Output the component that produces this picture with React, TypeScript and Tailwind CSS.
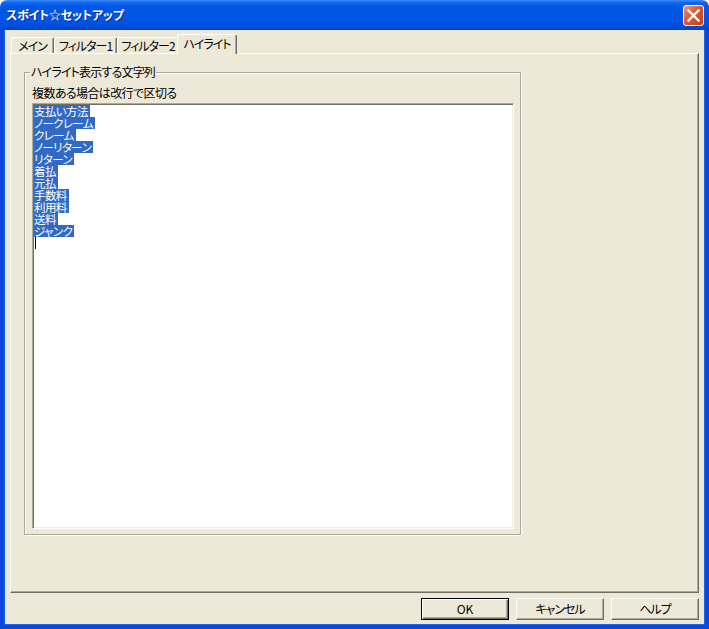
import React from "react";

const lines = [
  "支払い方法",
  "ノークレーム",
  "クレーム",
  "ノーリターン",
  "リターン",
  "着払",
  "元払",
  "手数料",
  "利用料",
  "送料",
  "ジャンク",
];

function Tab({ label, w, selected }: { label: string; w: number; selected?: boolean }) {
  if (selected) {
    return (
      <div
        className="relative z-10 -mb-[1px] -ml-[2px] h-[20px] flex items-center justify-center bg-[#ECE9D8] border-t border-l border-r border-t-white border-l-white border-r-[#716F64] rounded-tl-[2px] rounded-tr-[2px] shadow-[inset_-1px_0_0_#ACA899] leading-[14px] pb-[1px] tracking-[-1px]"
        style={{ width: w }}
      >
        {label}
      </div>
    );
  }
  return (
    <div
      className="h-[16px] flex items-center justify-center bg-[#ECE9D8] border-t border-l border-r border-t-white border-l-white border-r-[#716F64] rounded-tl-[2px] rounded-tr-[2px] shadow-[inset_-1px_0_0_#ACA899] leading-[14px] pt-[1px] tracking-[-1px]"
      style={{ width: w }}
    >
      {label}
    </div>
  );
}

function Button({ label, def }: { label: string; def?: boolean }) {
  return (
    <div
      className={
        def
          ? "w-[88px] h-[22px] flex items-center justify-center border border-black bg-[#ECE9D8] shadow-[inset_1px_1px_0_#fff,inset_-1px_-1px_0_#716F64,inset_-2px_-2px_0_#ACA899] leading-[14px]"
          : "w-[88px] h-[22px] flex items-center justify-center border border-t-white border-l-white border-r-[#716F64] border-b-[#716F64] bg-[#ECE9D8] shadow-[inset_-1px_-1px_0_#ACA899] leading-[14px] tracking-[-1px]"
      }
    >
      {label}
    </div>
  );
}

export default function App() {
  return (
    <div className="w-[709px] h-[629px] flex flex-col bg-white font-['Noto_Sans_CJK_JP',sans-serif] [font-feature-settings:'palt'] text-[12px] text-black select-none">
      {/* Title bar */}
      <div className="h-[30px] shrink-0 rounded-t-[7px] bg-[linear-gradient(to_bottom,#3D8EF7_0%,#1467EE_8%,#0058E6_22%,#0055E5_70%,#004CDA_88%,#0043C8_100%)] flex items-center pl-[6px] pr-[5px]">
        <span className="text-white font-bold text-[12px] leading-[14px] tracking-[-0.2px] [text-shadow:1px_1px_0_#0A2A8C]">
          スポイト☆セットアップ
        </span>
        <div className="ml-auto w-[21px] h-[21px] rounded-[3px] border border-white bg-[linear-gradient(135deg,#EE9A7E_0%,#DE5631_45%,#C8401C_100%)] flex items-center justify-center">
          <svg width="19" height="19" viewBox="0 0 19 19">
            <path d="M4.5 4.5 L14.5 14.5 M14.5 4.5 L4.5 14.5" stroke="#fff" strokeWidth="2.4" strokeLinecap="square" />
          </svg>
        </div>
      </div>

      {/* Window body */}
      <div className="flex-1 flex flex-col bg-[#ECE9D8] border-l-4 border-r-4 border-b-4 border-[#0A48DC] shadow-[inset_1px_0_0_#1C63EC,inset_-1px_0_0_#1C63EC,inset_0_-1px_0_#1C63EC] pt-[3px] pl-[6px] pr-[6px] pb-[5px]">
        {/* Tabs */}
        <div className="h-[20px] shrink-0 flex items-end pl-[1px] relative z-10">
          <Tab label="メイン" w={43} />
          <Tab label="フィルター1" w={63} />
          <Tab label="フィルター2" w={62} />
          <Tab label="ハイライト" w={60} selected />
        </div>

        {/* Tab panel */}
        <div className="flex-1 border border-t-white border-l-white border-r-[#716F64] border-b-[#716F64] shadow-[inset_-1px_-1px_0_#ACA899] pl-[13px] pt-[18px]">
          {/* Group box */}
          <div className="relative w-[497px] h-[463px] border border-[#ACA899] shadow-[inset_1px_1px_0_#fff,1px_1px_0_#fff] pl-[7px] pt-[13px]">
            <span className="absolute left-[5px] top-[-8px] px-[1px] bg-[#ECE9D8] leading-[14px] tracking-[-0.8px]">
              ハイライト表示する文字列
            </span>
            <div className="leading-[14px] tracking-[-0.6px]">複数ある場合は改行で区切る</div>
            <div className="mt-[3px] w-[482px] h-[426px] bg-white border border-t-[#ACA899] border-l-[#ACA899] border-r-white border-b-white shadow-[inset_1px_1px_0_#716F64,inset_-1px_-1px_0_#F1EFE2] pl-[1px] pt-[1px]">
              {lines.map((t) => (
                <div key={t} className="h-[12px] flex">
                  <span className="inline-block h-[12px] leading-[12px] text-[11.5px] tracking-[-0.6px] bg-[#316AC5] text-white pr-[2px]">{t}</span>
                </div>
              ))}
              <div className="ml-[1px] w-[1px] h-[12px] bg-black" />
            </div>
          </div>
        </div>

        {/* Buttons */}
        <div className="mt-[5px] flex justify-end gap-[7px] shrink-0">
          <Button label="OK" def />
          <Button label="キャンセル" />
          <Button label="ヘルプ" />
        </div>
      </div>
    </div>
  );
}
